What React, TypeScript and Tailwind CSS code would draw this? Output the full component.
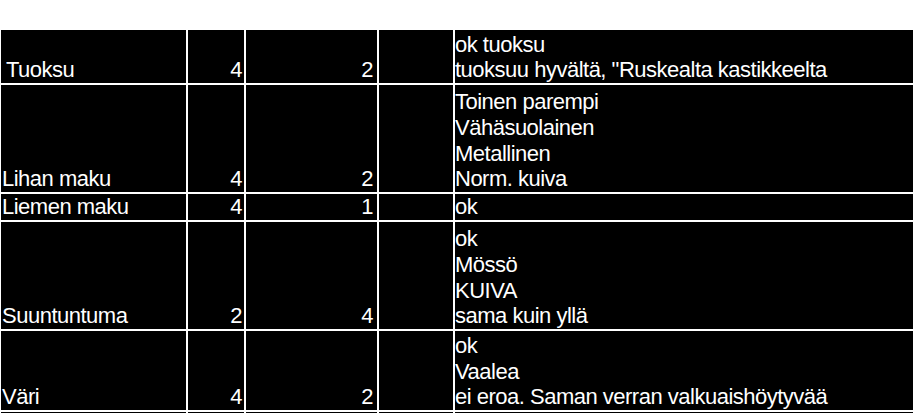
import React from "react";

type Row = { name: string; a: string; b: string; notes: string[]; indent?: boolean };

const rows: Row[] = [
  { name: "Tuoksu", a: "4", b: "2", notes: ["ok tuoksu", "tuoksuu hyvältä, \"Ruskealta kastikkeelta"], indent: true },
  { name: "Lihan maku", a: "4", b: "2", notes: ["Toinen parempi", "Vähäsuolainen", "Metallinen", "Norm. kuiva"] },
  { name: "Liemen maku", a: "4", b: "1", notes: ["ok"] },
  { name: "Suuntuntuma", a: "2", b: "4", notes: ["ok", "Mössö", "KUIVA", "sama kuin yllä"] },
  { name: "Väri", a: "4", b: "2", notes: ["ok", "Vaalea", "ei eroa. Saman verran valkuaishöytyvää"] },
];

const cell = "bg-black flex flex-col justify-end overflow-hidden";
const txt = "leading-[26.75px] whitespace-pre mb-[-1px]";

export default function App() {
  return (
    <div
      className="w-[915px] h-[413px] bg-white pt-[30px] overflow-hidden text-white text-[22px] tracking-[-0.5px]"
      style={{ fontFamily: '"Liberation Sans", Arial, sans-serif' }}
    >
      <div className="grid grid-cols-[185px_56px_131px_74px_458px] grid-rows-[53px_107px_26px_107px_79px_1px] gap-[2px] pl-[1px] bg-white">
        {rows.map((r, i) => (
          <React.Fragment key={i}>
            <div className={`${cell} ${r.indent ? "pl-[5px]" : "pl-[1px]"}`}>
              <span className={txt}>{r.name}</span>
            </div>
            <div className={`${cell} items-end pr-[2px]`}>
              <span className={txt}>{r.a}</span>
            </div>
            <div className={`${cell} items-end pr-[4px]`}>
              <span className={txt}>{r.b}</span>
            </div>
            <div className={cell}></div>
            <div className={`${cell} pl-[0px]`}>
              {r.notes.map((n, j) => (
                <span key={j} className={txt}>
                  {n}
                </span>
              ))}
            </div>
          </React.Fragment>
        ))}
        <div className="bg-black"></div>
        <div className="bg-black"></div>
        <div className="bg-black"></div>
        <div className="bg-black"></div>
        <div className="bg-black"></div>
      </div>
    </div>
  );
}
